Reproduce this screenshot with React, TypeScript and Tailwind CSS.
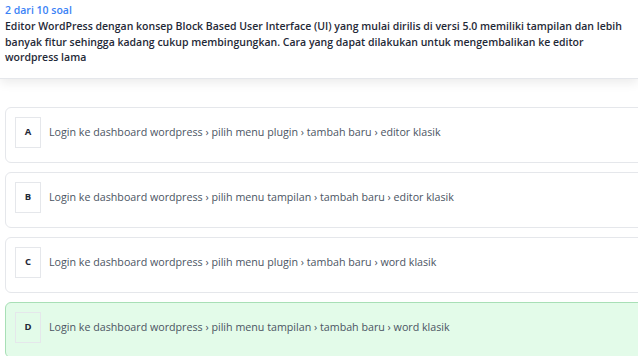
const options = [
  { key: "A", text: "Login ke dashboard wordpress › pilih menu plugin › tambah baru › editor klasik", selected: false },
  { key: "B", text: "Login ke dashboard wordpress › pilih menu tampilan › tambah baru › editor klasik", selected: false },
  { key: "C", text: "Login ke dashboard wordpress › pilih menu plugin › tambah baru › word klasik", selected: false },
  { key: "D", text: "Login ke dashboard wordpress › pilih menu tampilan › tambah baru › word klasik", selected: true },
];

export default function App() {
  return (
    <div className="w-[638px] h-[356px] overflow-hidden bg-white font-['Open_Sans',sans-serif]">
      {/* Question header */}
      <div className="bg-white px-[5px] pt-[2px] pb-[12px] shadow-[0_4px_10px_rgba(0,0,0,0.08)] border-b border-[#e5e7eb]">
        <p className="text-[10.5px] leading-[16px] font-semibold text-[#3b82f6]">2 dari 10 soal</p>
        <p className="mt-[1px] text-[10.5px] leading-[15.5px] font-semibold text-[#1f2937]">
          Editor WordPress dengan konsep Block Based User Interface (UI) yang mulai dirilis di versi 5.0 memiliki tampilan dan lebih banyak fitur sehingga kadang cukup membingungkan. Cara yang dapat dilakukan untuk mengembalikan ke editor wordpress lama
        </p>
      </div>

      {/* Options */}
      <div className="flex flex-col gap-[9px] pl-[5px] mr-[-10px] mt-[28px]">
        {options.map((o) => (
          <div
            key={o.key}
            className={`flex items-start gap-[8px] h-[56px] pt-[9px] pl-[9px] rounded-[6px] border ${
              o.selected ? "bg-[#e3fbe9] border-[#a8dfb6]" : "bg-white border-[#e5e7eb]"
            }`}
          >
            <div className="flex items-center justify-center w-[26px] h-[31px] border border-[#e5e7eb] text-[9.5px] font-bold text-[#1f2937]">
              {o.key}
            </div>
            <span className="leading-[31px] text-[10.7px] text-[#4b5563]">{o.text}</span>
          </div>
        ))}
      </div>
    </div>
  );
}
